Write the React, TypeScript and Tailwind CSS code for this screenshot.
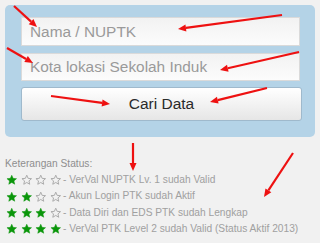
import React from 'react'

const ROWS = [
  { n: 1, text: '- VerVal NUPTK Lv. 1 sudah Valid' },
  { n: 2, text: '- Akun Login PTK sudah Aktif' },
  { n: 3, text: '- Data Diri dan EDS PTK sudah Lengkap' },
  { n: 4, text: '- VerVal PTK Level 2 sudah Valid (Status Aktif 2013)' },
]

// arrows drawn on top of the screenshot: [x1,y1,x2,y2] (x2,y2 = tip)
const ARROWS = [
  [14, 6, 37, 27],
  [282, 15, 178, 29],
  [7, 48, 33, 63],
  [299, 52, 220, 70],
  [51, 96, 110, 104],
  [267, 88, 210, 102],
  [133, 143, 133, 171],
  [293, 153, 264, 197],
]

function Star({ filled }: { filled: boolean }) {
  return (
    <svg width="11.5" height="11.5" viewBox="0 0 24 24" className="shrink-0">
      <path
        d="M12 2.5l2.9 6.6 7.1.6-5.4 4.7 1.6 7-6.2-3.7-6.2 3.7 1.6-7L2 9.7l7.1-.6z"
        fill={filled ? '#0a960a' : 'none'}
        stroke={filled ? '#0a960a' : '#a8a8a8'}
        strokeWidth={filled ? 1 : 2}
        strokeLinejoin="round"
      />
    </svg>
  )
}

function Arrows() {
  return (
    <svg className="absolute inset-0 pointer-events-none" width="320" height="243">
      {ARROWS.map(([x1, y1, x2, y2], i) => {
        const a = Math.atan2(y2 - y1, x2 - x1)
        const L = 8, W = 3.5
        const bx = x2 - L * Math.cos(a), by = y2 - L * Math.sin(a)
        const px = -Math.sin(a) * W, py = Math.cos(a) * W
        return (
          <g key={i}>
            <line x1={x1} y1={y1} x2={bx} y2={by} stroke="#ee1111" strokeWidth="2.2" />
            <polygon points={`${x2},${y2} ${bx + px},${by + py} ${bx - px},${by - py}`} fill="#ee1111" />
          </g>
        )
      })}
    </svg>
  )
}

export default function App() {
  return (
    <div className="relative w-[320px] h-[243px] overflow-hidden bg-[#f1f1f1]" style={{ fontFamily: '"Liberation Sans", Arial, sans-serif' }}>
      <div className="pt-[5px] px-[5px]">
        <div className="rounded-[5px] bg-[#b4d3e7] pt-[12px] pb-[16px] pl-[16px] pr-[15px] flex flex-col">
          <div className="h-[29px] border border-[#dadada] bg-gradient-to-b from-[#f2f2f2] to-[#fcfcfc] flex items-center pl-[8px] text-[15.4px] text-[#9a9a9a]">Nama / NUPTK</div>
          <div className="mt-[7px] h-[28px] border border-[#dadada] bg-gradient-to-b from-[#f2f2f2] to-[#fcfcfc] flex items-center pl-[8px] text-[15.4px] text-[#9a9a9a]">Kota lokasi Sekolah Induk</div>
          <div className="mt-[6px] h-[34px] -mr-[2px] rounded-[3px] border border-[#9fb9cc] bg-gradient-to-b from-[#ffffff] to-[#e6e6e6] flex items-center justify-center text-[15.5px] text-[#2a2a2a] pb-[1px]">Cari Data</div>
        </div>
      </div>
      <div className="pl-[5px] pt-[19px] text-[10.2px] leading-[16px] text-[#8e8e8e]">
        <div>Keterangan Status:</div>
        <div className="flex flex-col">
          {ROWS.map(r => (
            <div key={r.n} className="flex items-center h-[16.3px]">
              <div className="flex items-center gap-[3px] pl-[1px] w-[58px]">
                {[1, 2, 3, 4].map(k => <Star key={k} filled={k <= r.n} />)}
              </div>
              <span className="text-[#a0a0a0]">{r.text}</span>
            </div>
          ))}
        </div>
      </div>
      <Arrows />
    </div>
  )
}
